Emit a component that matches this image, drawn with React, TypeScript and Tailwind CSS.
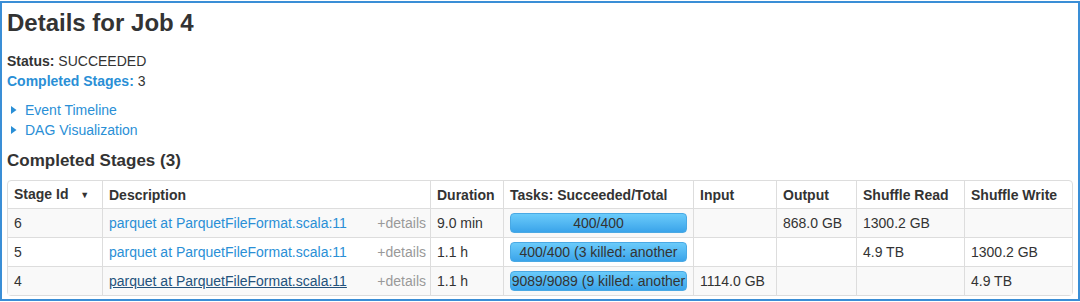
import { useState } from "react";

type Stage = {
  id: number;
  desc: string;
  duration: string;
  tasks: string;
  input: string;
  output: string;
  shuffleRead: string;
  shuffleWrite: string;
  underline?: boolean;
};

const stages: Stage[] = [
  { id: 6, desc: "parquet at ParquetFileFormat.scala:11", duration: "9.0 min", tasks: "400/400", input: "", output: "868.0 GB", shuffleRead: "1300.2 GB", shuffleWrite: "" },
  { id: 5, desc: "parquet at ParquetFileFormat.scala:11", duration: "1.1 h", tasks: "400/400 (3 killed: another attempt succeeded)", input: "", output: "", shuffleRead: "4.9 TB", shuffleWrite: "1300.2 GB" },
  { id: 4, desc: "parquet at ParquetFileFormat.scala:11", duration: "1.1 h", tasks: "9089/9089 (9 killed: another attempt succeeded)", input: "1114.0 GB", output: "", shuffleRead: "", shuffleWrite: "4.9 TB", underline: true },
];

function Caret() {
  return (
    <svg width="8" height="10" viewBox="0 0 8 10" className="mr-[7px]">
      <path d="M1 1 L6.5 5 L1 9 Z" fill="#2a8fd6" />
    </svg>
  );
}

export default function App() {
  const [open] = useState(false);
  const th = "border-l border-[#dddddd] px-[6px] text-left font-bold";
  const td = "border-l border-t border-[#dddddd] px-[6px]";

  return (
    <div className="w-[1080px] h-[302px] bg-white pt-[1px]" style={{ fontFamily: '"Liberation Sans", Arial, sans-serif' }}>
      <div className="h-[300px] border-2 border-[#3a8ed6] px-[5px] text-[#333333]">
        <h1 className="mt-[7px] text-[24px] leading-[26px] font-bold">Details for Job 4</h1>
        <div className="mt-[15px] text-[14px] leading-[20px]">
          <div>
            <strong>Status:</strong> SUCCEEDED
          </div>
          <div>
            <strong className="text-[#2a8fd6]">Completed Stages:</strong> 3
          </div>
        </div>
        <div className="mt-[9px] text-[14px] leading-[20px] text-[#2a8fd6]">
          <div className="flex items-center pl-[3px]">
            <Caret />
            Event Timeline
          </div>
          <div className="flex items-center pl-[3px]">
            <Caret />
            DAG Visualization
          </div>
        </div>
        <h4 className="mt-[11px] text-[17px] leading-[20px] font-bold">Completed Stages ({open ? 0 : 3})</h4>
        <table className="mt-[9px] w-[1066px] border-separate border-spacing-0 border border-[#dddddd] rounded-[4px] text-[14px] leading-[18px]">
          <thead>
            <tr className="h-[27px]">
              <th className="w-[94px] px-[6px] text-left font-bold">
                Stage Id <span className="ml-[8px] text-[9px] align-middle">▼</span>
              </th>
              <th className={`${th} w-[328px]`}>Description</th>
              <th className={`${th} w-[73px]`}>Duration</th>
              <th className={`${th} w-[189px]`}>Tasks: Succeeded/Total</th>
              <th className={`${th} w-[83px]`}>Input</th>
              <th className={`${th} w-[80px]`}>Output</th>
              <th className={`${th} w-[108px]`}>Shuffle Read</th>
              <th className={th}>Shuffle Write</th>
            </tr>
          </thead>
          <tbody>
            {stages.map((s, i) => (
              <tr key={s.id} className={`h-[29px] ${i % 2 === 0 ? "bg-[#f9f9f9]" : "bg-white"}`}>
                <td className="border-t border-[#dddddd] px-[6px]">{s.id}</td>
                <td className={td}>
                  <div className="flex justify-between">
                    <span className={s.underline ? "underline text-[#23527c]" : "text-[#2a8fd6]"}>{s.desc}</span>
                    <span className="text-[#999999] -mr-[2px]">+details</span>
                  </div>
                </td>
                <td className={td}>{s.duration}</td>
                <td className={td}>
                  <div className="h-[20px] w-[177px] overflow-hidden rounded-[4px] bg-gradient-to-b from-[#6acbfa] to-[#3aa4ea] text-center text-[#333333] leading-[19px] border border-[#4aa9e4]">
                    {s.tasks}
                  </div>
                </td>
                <td className={td}>{s.input}</td>
                <td className={td}>{s.output}</td>
                <td className={td}>{s.shuffleRead}</td>
                <td className={td}>{s.shuffleWrite}</td>
              </tr>
            ))}
          </tbody>
        </table>
      </div>
    </div>
  );
}
